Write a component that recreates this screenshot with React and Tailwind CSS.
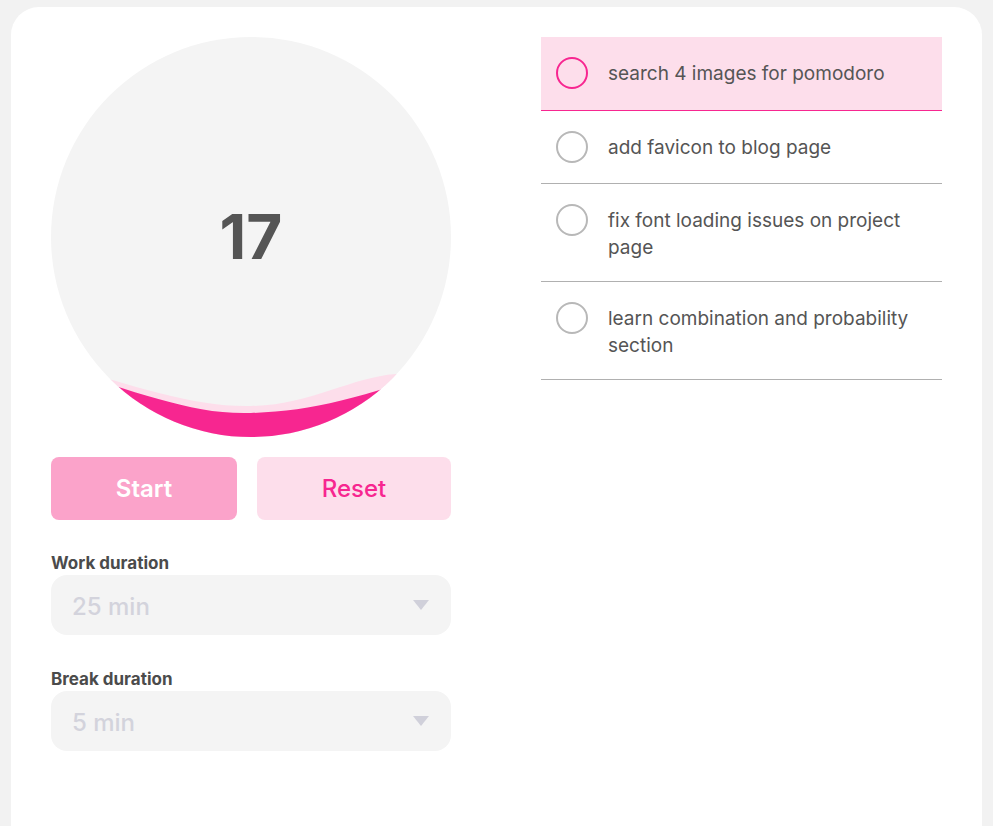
import React, { useState } from "react";

const tasks = [
  { id: 1, text: "search 4 images for pomodoro", active: true },
  { id: 2, text: "add favicon to blog page" },
  { id: 3, text: "fix font loading issues on project page" },
  { id: 4, text: "learn combination and probability section" },
];

function Wave() {
  return (
    <svg viewBox="0 0 400 400" className="absolute inset-0 w-full h-full">
      <path
        d="M0 326 C 90 350, 140 370, 200 369 C 260 368, 300 340, 345 337 C 370 336, 390 338, 400 340 L400 400 L0 400 Z"
        fill="#fddeeb"
      />
      <path
        d="M0 330 C 90 355, 140 378, 200 376 C 260 374, 310 362, 400 328 L400 400 L0 400 Z"
        fill="#f72690"
      />
    </svg>
  );
}

function Dropdown({ label, value }) {
  return (
    <div className="flex flex-col">
      <span className="text-[17px] leading-6 font-bold text-[#4b4b4b]">{label}</span>
      <div className="h-[60px] rounded-2xl bg-[#f4f4f4] flex items-center justify-between pl-[21px] pr-[22px]">
        <span className="text-[24px] font-medium text-[#d3d3dc] pt-[3px]">{value}</span>
        <svg width="16" height="10" viewBox="0 0 16 10">
          <path d="M0 0 L16 0 L8 10 Z" fill="#d0d0da" />
        </svg>
      </div>
    </div>
  );
}

export default function App() {
  const [seconds] = useState(17);

  return (
    <div
      className="h-screen overflow-hidden bg-[#f2f2f2] px-[11px] pt-[7px]"
      style={{ fontFamily: "Inter, 'Noto Sans', sans-serif" }}
    >
      <div className="h-[860px] bg-white rounded-[28px] px-[40px] pt-[30px] flex gap-[90px]">
        {/* timer column */}
        <div className="w-[400px] flex flex-col">
          <div className="relative w-[400px] h-[400px] rounded-full bg-[#f4f4f4] overflow-hidden flex items-center justify-center">
            <Wave />
            <span className="relative text-[62px] font-bold text-[#555555] leading-none">{seconds}</span>
          </div>

          <div className="flex gap-5 mt-5">
            <button className="flex-auto h-[63px] rounded-lg bg-[#fba3ca] text-white text-[24px] font-semibold">
              Start
            </button>
            <button className="flex-auto h-[63px] rounded-lg bg-[#fddeeb] text-[#f72690] text-[24px] font-medium">
              Reset
            </button>
          </div>

          <div className="flex flex-col gap-8 mt-[31px]">
            <Dropdown label="Work duration" value="25 min" />
            <Dropdown label="Break duration" value="5 min" />
          </div>
        </div>

        {/* task list */}
        <div className="flex-1">
          {tasks.map((t) => (
            <div
              key={t.id}
              className={
                t.active
                  ? "flex items-start gap-5 px-[15px] pt-5 pb-[21px] bg-[#fddeeb] border-b border-b-[#f72690]"
                  : "flex items-start gap-5 px-[15px] py-5 border-b border-b-[#b0b0b0]"
              }
            >
              <span
                className={
                  t.active
                    ? "shrink-0 w-8 h-8 rounded-full border-2 border-[#f72690]"
                    : "shrink-0 w-8 h-8 rounded-full border-2 border-[#b8b8b8]"
                }
              />
              <span className="text-[19px] leading-[27px] pt-[3px] text-[#555555] pr-4">{t.text}</span>
            </div>
          ))}
        </div>
      </div>
    </div>
  );
}
